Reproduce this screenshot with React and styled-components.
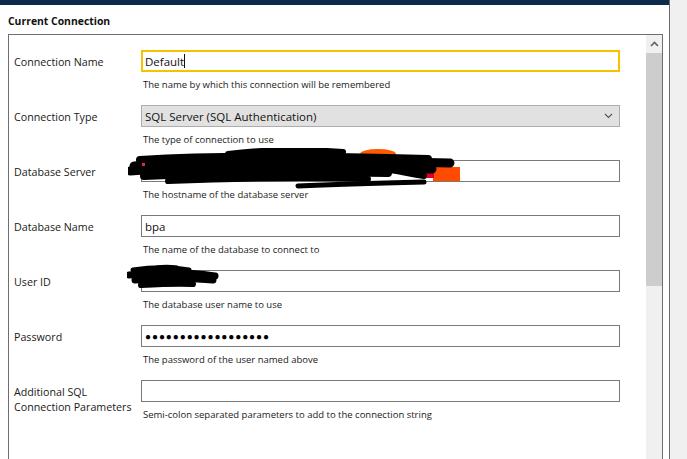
import React from 'react'
import styled, { createGlobalStyle } from 'styled-components'

const GlobalStyle = createGlobalStyle`
  html, body {
    margin: 0;
    padding: 0;
    background: #ffffff;
    overflow: hidden;
  }
  body {
    font-family: "Open Sans", "Noto Sans", "Liberation Sans", sans-serif;
    color: #1a1a1a;
  }
`

const Window = styled.div`
  display: flex;
  width: 687px;
  height: 459px;
`

const Main = styled.div`
  width: 669px;
  display: flex;
  flex-direction: column;
`

const TopBar = styled.div`
  height: 5px;
  background: #0e2a4b;
`

const Divider = styled.div`
  width: 1px;
  background: #6b6b6b;
`

const SidePane = styled.div`
  flex: 1;
  background: #f0f0f0;
`

const Title = styled.div`
  padding: 8px 0 5px 8px;
  font-size: 10.4px;
  line-height: 16px;
  font-weight: 700;
  color: #111;
`

const Panel = styled.div`
  margin-left: 8px;
  width: 655px;
  flex: 1;
  box-sizing: border-box;
  border: 1px solid #6e6e6e;
  border-bottom: none;
  display: flex;
`

const Form = styled.div`
  flex: 1;
  padding-top: 15px;
  display: flex;
  flex-direction: column;
`

const Row = styled.div`
  position: relative;
  display: grid;
  grid-template-columns: 132px 479px;
  height: 55px;
`

const Label = styled.div`
  padding: 5px 0 0 5px;
  font-size: 10.7px;
  line-height: 15px;
  color: #1a1a1a;
`

const Field = styled.div`
  display: flex;
  flex-direction: column;
`

const Input = styled.div`
  box-sizing: border-box;
  height: 22px;
  display: flex;
  align-items: center;
  padding: 0 ${(p) => (p.$focused ? '2px' : '3px')};
  border: ${(p) => (p.$focused ? '2px solid #f7c300' : '1px solid #7a7a7a')};
  background: #fff;
  font-size: 11.5px;
  color: #111;
  white-space: nowrap;
`

const Caret = styled.span`
  display: inline-block;
  width: 1px;
  height: 14px;
  background: #111;
`

const Select = styled.div`
  box-sizing: border-box;
  height: 22px;
  display: flex;
  align-items: center;
  justify-content: space-between;
  padding: 0 6px 0 3px;
  border: 1px solid #adadad;
  background: #e1e1e1;
  font-size: 11.5px;
  color: #111;
`

const Dots = styled.span`
  font-size: 10px;
  letter-spacing: 0.9px;
  color: #000;
`

const Help = styled.div`
  margin-top: 6px;
  font-size: 9.5px;
  line-height: 13px;
  padding-left: 2px;
  color: #1a1a1a;
`

const Scribble = styled.svg`
  position: absolute;
  left: ${(p) => p.$left}px;
  top: ${(p) => p.$top}px;
  pointer-events: none;
`

const ScrollBar = styled.div`
  width: 16px;
  background: #f0f0f0;
  display: flex;
  flex-direction: column;
`

const ArrowBox = styled.div`
  height: 18px;
  display: flex;
  align-items: center;
  justify-content: center;
`

const Thumb = styled.div`
  height: 233px;
  background: #cdcdcd;
`

function Chevron({ up }) {
  return (
    <svg width='9' height='6' viewBox='0 0 9 6'>
      <path
        d={up ? 'M1 5 L4.5 1.5 L8 5' : 'M1 1 L4.5 4.5 L8 1'}
        fill='none'
        stroke={up ? '#606060' : '#555'}
        strokeWidth={up ? 1.6 : 1.1}
      />
    </svg>
  )
}

function ServerScribble() {
  return (
    <Scribble $left={119} $top={-12} width='340' height='44' viewBox='0 0 340 44'>
      <ellipse cx='250' cy='6' rx='18' ry='5' fill='#ff5a00' />
      <rect x='305' y='19' width='27' height='14' fill='#ff4a00' />
      <rect x='292' y='20' width='14' height='10' fill='#e00020' />
      <g fill='none' stroke='#000' strokeLinecap='round' strokeLinejoin='round'>
        <path d='M100 6 C140 1 175 1 215 4' strokeWidth='6' />
        <path d='M12 12 C80 8 170 7 300 11' strokeWidth='8' />
        <path d='M6 18 C90 13 200 12 322 15' strokeWidth='9' />
        <path d='M2 23 C60 18 140 17 220 20 C260 21 290 21 304 21' strokeWidth='9' />
        <path d='M16 28 C80 25 160 23 260 25' strokeWidth='8' />
        <path d='M40 33 C110 30 170 29 240 31' strokeWidth='6' />
        <path d='M170 38 C210 36 250 35 296 34' strokeWidth='5' />
        <path d='M26 14 C36 30 70 31 96 26' strokeWidth='7' />
        <path d='M200 8 C230 15 260 22 296 28' strokeWidth='6' />
      </g>
      <rect x='14' y='15' width='3' height='3' fill='#e0206a' />
    </Scribble>
  )
}

function UserScribble() {
  return (
    <Scribble $left={118} $top={-6} width='94' height='28' viewBox='0 0 94 28'>
      <g fill='none' stroke='#000' strokeLinecap='round' strokeLinejoin='round'>
        <path d='M6 6 C25 3 45 3 62 6' strokeWidth='5' />
        <path d='M2 11 C30 8 60 8 88 12' strokeWidth='7' />
        <path d='M8 16 C35 14 60 14 86 16' strokeWidth='7' />
        <path d='M14 21 C32 20 50 19 66 20' strokeWidth='6' />
        <path d='M30 3 C36 2 42 2 50 3' strokeWidth='3' />
      </g>
    </Scribble>
  )
}

const fields = [
  { label: 'Connection Type', type: 'select', value: 'SQL Server (SQL Authentication)', help: 'The type of connection to use' },
  { label: 'Database Server', value: '', help: 'The hostname of the database server', scribble: <ServerScribble /> },
  { label: 'Database Name', value: 'bpa', help: 'The name of the database to connect to' },
  { label: 'User ID', value: '', help: 'The database user name to use', scribble: <UserScribble /> },
  { label: 'Password', type: 'password', value: '●●●●●●●●●●●●●●●●●●', help: 'The password of the user named above' },
  { label: <>Additional SQL<br />Connection Parameters</>, value: '', help: 'Semi-colon separated parameters to add to the connection string' }
]

export default function App() {
  return (
    <>
      <GlobalStyle />
      <Window>
        <Main>
          <TopBar />
          <Title>Current Connection</Title>
          <Panel>
            <Form>
              <Row>
                <Label>Connection Name</Label>
                <Field>
                  <Input $focused>Default<Caret /></Input>
                  <Help>The name by which this connection will be remembered</Help>
                </Field>
              </Row>
              {fields.map((f, i) => (
                <Row key={i}>
                  <Label>{f.label}</Label>
                  <Field>
                    {f.type === 'select'
                      ? <Select>{f.value}<Chevron /></Select>
                      : <Input>{f.type === 'password' ? <Dots>{f.value}</Dots> : f.value}</Input>}
                    <Help>{f.help}</Help>
                  </Field>
                  {f.scribble}
                </Row>
              ))}
            </Form>
            <ScrollBar>
              <ArrowBox><Chevron up /></ArrowBox>
              <Thumb />
            </ScrollBar>
          </Panel>
        </Main>
        <Divider />
        <SidePane />
      </Window>
    </>
  )
}
